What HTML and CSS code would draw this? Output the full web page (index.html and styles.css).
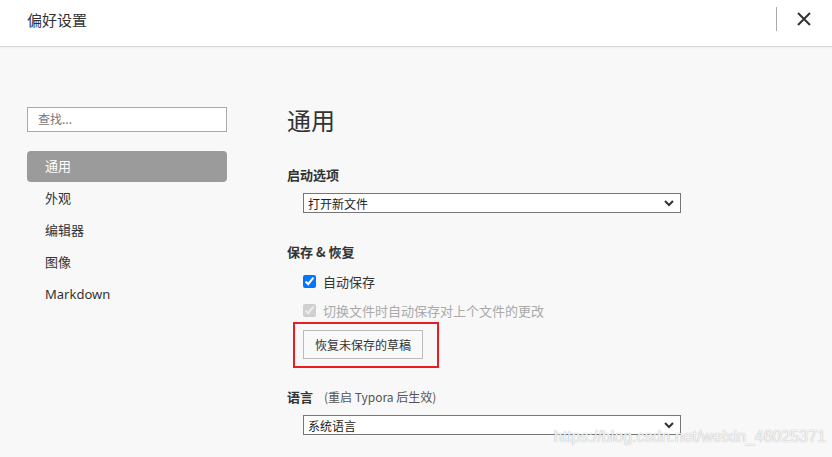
FILE: index.html
```html
<!DOCTYPE html>
<html lang="zh-CN">
<head>
<meta charset="utf-8">
<title>偏好设置</title>
<link rel="stylesheet" href="styles.css">
</head>
<body>
<div class="window">
  <header class="titlebar">
    <div class="title">偏好设置</div>
    <div class="actions">
      <span class="divider"></span>
      <button class="close" aria-label="关闭">
        <svg width="16" height="16" viewBox="0 0 16 16"><path d="M2 2 L14 14 M14 2 L2 14" stroke="#333" stroke-width="2" fill="none"/></svg>
      </button>
    </div>
  </header>
  <div class="content">
    <aside class="sidebar">
      <div class="search">查找...</div>
      <nav class="nav">
        <div class="nav-item active">通用</div>
        <div class="nav-item">外观</div>
        <div class="nav-item">编辑器</div>
        <div class="nav-item">图像</div>
        <div class="nav-item">Markdown</div>
      </nav>
    </aside>
    <main class="main">
      <h1 class="page-title">通用</h1>
      <h2 class="section-label first">启动选项</h2>
      <div class="select"><span>打开新文件</span><svg class="chev" width="10" height="7" viewBox="0 0 10 7"><path d="M1 1 L5 5 L9 1" stroke="#333" stroke-width="2" fill="none"/></svg></div>

      <h2 class="section-label second">保存 &amp; 恢复</h2>
      <div class="checks">
        <label class="check-row"><input type="checkbox" checked><span>自动保存</span></label>
        <label class="check-row disabled"><input type="checkbox" checked disabled><span>切换文件时自动保存对上个文件的更改</span></label>
      </div>
      <div class="highlight"><button class="btn">恢复未保存的草稿</button></div>

      <h2 class="section-label third">语言 <span class="hint">(重启 Typora 后生效)</span></h2>
      <div class="select"><span>系统语言</span><svg class="chev" width="10" height="7" viewBox="0 0 10 7"><path d="M1 1 L5 5 L9 1" stroke="#333" stroke-width="2" fill="none"/></svg></div>
    </main>
  </div>
  <div class="watermark">https://blog.csdn.net/weixin_46025371</div>
</div>
</body>
</html>
```

FILE: styles.css
```css
html, body {
  margin: 0;
  padding: 0;
}
body {
  font-family: "Noto Sans", "Noto Sans CJK SC", sans-serif;
  color: #333;
  background: #f8f8f8;
}
.window {
  position: relative;
  width: 832px;
  height: 457px;
  overflow: hidden;
  background: #f8f8f8;
}
.titlebar {
  height: 47px;
  background: #fff;
  border-bottom: 1px solid #d8d8d8;
  box-shadow: 0 1px 2px rgba(0,0,0,0.04);
  display: flex;
  align-items: center;
  justify-content: space-between;
  padding-left: 27px;
  padding-right: 20px;
  box-sizing: border-box;
}
.title {
  font-family: "Noto Sans CJK SC", sans-serif;
  font-size: 15px;
  line-height: 20px;
  color: #333;
  margin-top: -6px;
}
.actions {
  display: flex;
  align-items: center;
  margin-top: -8px;
}
.divider {
  width: 1px;
  height: 24px;
  background: #aaa;
  margin-right: 19px;
}
.close {
  border: 0;
  background: none;
  padding: 0;
  width: 16px;
  height: 16px;
  display: block;
}
.close svg { display: block; }
.content {
  display: flex;
  padding-top: 60px;
}
.sidebar {
  width: 200px;
  margin-left: 27px;
}
.search {
  height: 25px;
  box-sizing: border-box;
  border: 1px solid #aaa;
  background: #fff;
  padding-left: 10px;
  font-family: "Noto Sans CJK SC", sans-serif;
  font-size: 12px;
  line-height: 22px;
  color: #777;
}
.nav {
  margin-top: 19px;
}
.nav-item {
  height: 31px;
  margin-bottom: 1px;
  line-height: 31px;
  padding-left: 18px;
  font-size: 13px;
  color: #333;
  border-radius: 4px;
}
.nav-item.active {
  background: #9b9b9b;
  color: #fff;
}
.main {
  margin-left: 60px;
  flex: 1;
}
.page-title {
  margin: 0;
  font-family: "Noto Sans CJK SC", sans-serif;
  font-weight: 400;
  font-size: 24px;
  line-height: 26px;
  color: #333;
}
.section-label {
  margin: 0;
  font-family: "Noto Sans CJK SC", sans-serif;
  font-size: 13px;
  font-weight: 700;
  line-height: 18px;
  color: #333;
}
.section-label.first { margin-top: 33px; }
.section-label.second { margin-top: 30px; }
.section-label.third { margin-top: 20px; }
.hint {
  font-weight: 400;
  font-size: 12px;
  color: #555;
  margin-left: 8px;
}
.select {
  margin-top: 9px;
  margin-left: 16px;
  width: 378px;
  height: 20px;
  box-sizing: border-box;
  border: 1px solid #767676;
  background: #fff;
  display: flex;
  align-items: center;
  justify-content: space-between;
  padding: 0 6px 0 4px;
  font-family: "Noto Sans CJK SC", sans-serif;
  font-size: 12px;
  color: #222;
}
.chev { display: block; }
.checks {
  margin-top: 6px;
}
.check-row {
  display: flex;
  align-items: center;
  margin-left: 16px;
  height: 29px;
  font-family: "Noto Sans CJK SC", sans-serif;
  font-size: 13px;
  color: #333;
}
.check-row input {
  margin: 0 7px 0 0;
  width: 13px;
  height: 13px;
}
.check-row.disabled { color: #aaa; }
.highlight {
  display: inline-block;
  margin-left: 6px;
  margin-top: -3px;
  border: 2px solid #ec1c24;
  padding: 6px 14px 7px 8px;
}
.btn {
  display: block;
  width: 120px;
  height: 29px;
  box-sizing: border-box;
  border: 1px solid #bbb;
  background: #f9f9f9;
  font-family: "Noto Sans CJK SC", sans-serif;
  font-size: 12px;
  color: #333;
  padding: 0;
}
.watermark {
  position: absolute;
  right: 6px;
  bottom: 10px;
  font-family: "Liberation Sans", Arial, sans-serif;
  font-size: 16px;
  line-height: 20px;
  color: rgba(255,255,255,0.9);
  text-shadow: 0 0 1px rgba(110,110,110,0.7);
}
```
